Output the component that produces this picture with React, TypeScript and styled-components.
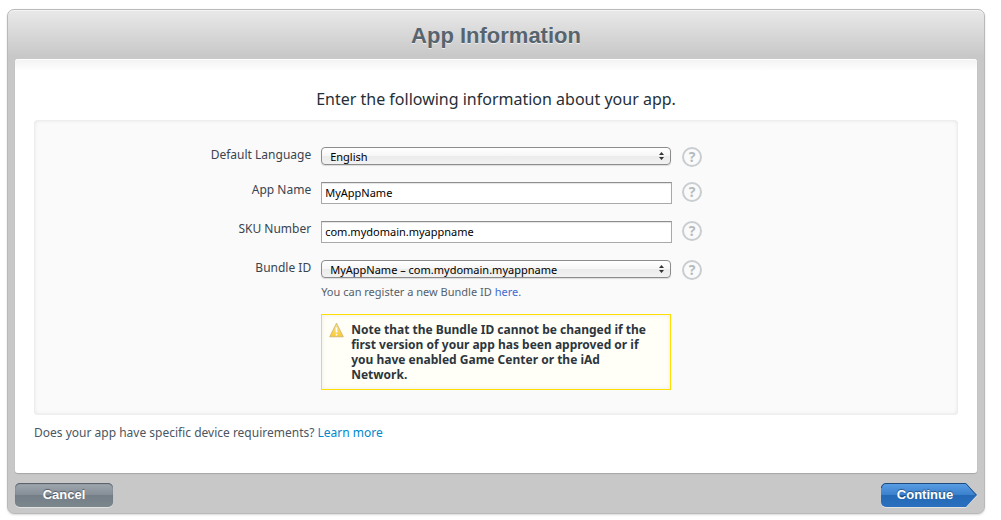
import React from "react";
import styled, { createGlobalStyle, css } from "styled-components";

const GlobalStyle = createGlobalStyle`
  * { box-sizing: border-box; }
  body {
    margin: 0;
    background: #fff;
    color: #39444f;
    font-family: "Lucida Grande", "Noto Sans", sans-serif;
    font-size: 12px;
    line-height: 16px;
  }
`;

const Frame = styled.main`
  margin: 9px 16px 6px 7px;
  padding: 0 7px 6px;
  border: 1px solid #b9b9b9;
  border-radius: 7px;
  background: linear-gradient(#e9e9e9, #c8c8c8 46px);
  box-shadow: inset 0 1px 0 #f5f5f5, 0 1px 2px rgba(0, 0, 0, 0.15);
`;

const Title = styled.h1`
  margin: 0;
  padding: 12px 0 9px;
  color: #57646e;
  font: bold 22px/28px "Liberation Sans", Arial, sans-serif;
  text-align: center;
  text-shadow: 0 1px 0 rgba(255, 255, 255, 0.6);
`;

const Sheet = styled.form`
  padding: 29px 19px 32px;
  border-radius: 3px;
  background: linear-gradient(#f2f2f2, #fff 12px);
  box-shadow: inset 0 1px 0 #fff, 0 1px 1px #a6a6a6;
`;

const Intro = styled.p`
  margin: 0;
  color: #262f38;
  font-size: 16px;
  line-height: 22px;
  text-align: center;
`;

const Panel = styled.section`
  margin-top: 10px;
  padding: 27px 0 25px;
  border-radius: 4px;
  background: #fafafa;
  box-shadow: inset 0 0 4px rgba(0, 0, 0, 0.12);
`;

const Row = styled.div<{ $gap: number }>`
  display: grid;
  grid-template-columns: 30% 351px 20px;
  column-gap: 10px;
  align-items: start;
  margin-bottom: ${(p) => p.$gap}px;
`;

const Label = styled.label`
  text-align: right;
`;

const control = css`
  color: #000;
  font-family: inherit;
  font-size: 11px;
`;

const TextBox = styled.input`
  ${control}
  width: 100%;
  height: 22px;
  padding: 0 3px 2px;
  border: 1px solid #a9a9a9;
  border-top-color: #8e8e8e;
  border-radius: 0;
  background: #fff;
  box-shadow: inset 0 1px 1px #e4e4e4;
`;

const SelectWrap = styled.div`
  position: relative;
  display: flex;
  margin-right: 1px;
`;

const Select = styled.select`
  ${control}
  appearance: none;
  width: 100%;
  height: 18px;
  padding: 0 20px 0 8px;
  border: 1px solid #8c8c8c;
  border-radius: 4px;
  background: linear-gradient(#fff, #f6f6f6 50%, #ebebeb 50%, #f2f2f2);
  box-shadow: 0 1px 1px rgba(0, 0, 0, 0.12);
`;

const Arrows = styled.svg`
  position: absolute;
  top: 5px;
  right: 7px;
  pointer-events: none;
`;

const Help = styled.button`
  width: 20px;
  height: 20px;
  padding: 0;
  border: 2px solid #c9cdd0;
  border-radius: 50%;
  background: transparent;
  color: #b4bbbf;
  font: bold 14px/16px "Noto Sans", sans-serif;
`;

const Hint = styled.p`
  margin: 0;
  padding-top: 6px;
  color: #55606b;
  font-size: 11px;
`;

const Link = styled.a<{ $color: string }>`
  color: ${(p) => p.$color};
  text-decoration: none;
`;

const Note = styled.p`
  display: flex;
  gap: 7px;
  margin: 14px 1px 0 0;
  padding: 7px 16px 7px 7px;
  border: 1px solid #ffde00;
  background: #fffff7;
  box-shadow: inset 0 0 5px rgba(0, 0, 0, 0.08);
  color: #2d363e;
  font-weight: bold;
  line-height: 15px;
`;

const WarningIcon = styled.svg`
  flex: none;
`;

const Requirements = styled.p`
  margin: 10px 0 0;
  color: #4a5661;
`;

const Footer = styled.footer`
  display: flex;
  justify-content: space-between;
  padding-top: 10px;
`;

const buttonText = css`
  border: 0;
  color: #fff;
  font: bold 13px/24px "Liberation Sans", Arial, sans-serif;
  text-shadow: 0 -1px 1px rgba(0, 0, 0, 0.4);
`;

const CancelButton = styled.button`
  ${buttonText}
  width: 98px;
  height: 24px;
  padding: 0;
  border-radius: 5px;
  background: linear-gradient(#a0a8b0, #858e96 50%, #747e86 50%, #7c868d);
  box-shadow: inset 0 1px 1px #555d66, 0 1px 0 #e2e2e2;
`;

const ContinueButton = styled.button`
  ${buttonText}
  position: relative;
  width: 96px;
  height: 24px;
  padding: 0 8px 0 0;
  background: none;
`;

const ArrowShape = styled.svg`
  position: absolute;
  inset: 0;
  z-index: -1;
  overflow: visible;
`;

const ButtonLayer = styled.div`
  position: relative;
  z-index: 0;
`;

function SelectField({ id, value }: { id: string; value: string }) {
  return (
    <SelectWrap>
      <Select id={id} defaultValue={value}>
        <option>{value}</option>
      </Select>
      <Arrows width="5" height="8" viewBox="0 0 5 8">
        <path d="M2.5 0L5 3H0zM2.5 8L0 5h5z" fill="#333" />
      </Arrows>
    </SelectWrap>
  );
}

const HelpButton = ({ topic }: { topic: string }) => (
  <Help type="button" aria-label={`Help: ${topic}`}>?</Help>
);

export default function App() {
  return (
    <>
      <GlobalStyle />
      <Frame>
        <Title>App Information</Title>
        <Sheet id="app-form" onSubmit={(e) => e.preventDefault()}>
          <Intro>Enter the following information about your app.</Intro>
          <Panel>
            <Row $gap={15}>
              <Label htmlFor="language">Default Language</Label>
              <SelectField id="language" value="English" />
              <HelpButton topic="Default Language" />
            </Row>
            <Row $gap={17}>
              <Label htmlFor="name">App Name</Label>
              <TextBox id="name" defaultValue="MyAppName" />
              <HelpButton topic="App Name" />
            </Row>
            <Row $gap={17}>
              <Label htmlFor="sku">SKU Number</Label>
              <TextBox id="sku" defaultValue="com.mydomain.myappname" />
              <HelpButton topic="SKU Number" />
            </Row>
            <Row $gap={0}>
              <Label htmlFor="bundle">Bundle ID</Label>
              <div>
                <SelectField id="bundle" value="MyAppName – com.mydomain.myappname" />
                <Hint>
                  You can register a new Bundle ID <Link href="#" $color="#3f6bd0">here</Link>.
                </Hint>
                <Note>
                  <WarningIcon width="15" height="16" viewBox="0 0 15 16">
                    <defs>
                      <linearGradient id="warn" x1="0" y1="0" x2="0" y2="1">
                        <stop offset="0" stopColor="#f9e28a" />
                        <stop offset="1" stopColor="#fbcb32" />
                      </linearGradient>
                    </defs>
                    <path d="M7.5 1.2L14.3 14.8H.7z" fill="url(#warn)" stroke="#c9b070" strokeWidth=".8" strokeLinejoin="round" />
                    <path d="M7.5 5.5v5M7.5 11.8v1.6" stroke="#fff" strokeWidth="1.6" />
                  </WarningIcon>
                  <span>
                    Note that the Bundle ID cannot be changed if the first version of your app has been
                    approved or if you have enabled Game Center or the iAd Network.
                  </span>
                </Note>
              </div>
              <HelpButton topic="Bundle ID" />
            </Row>
          </Panel>
          <Requirements>
            Does your app have specific device requirements? <Link href="#" $color="#0088cc">Learn more</Link>
          </Requirements>
        </Sheet>
        <Footer>
          <CancelButton type="button">Cancel</CancelButton>
          <ButtonLayer>
            <ContinueButton type="submit" form="app-form">
              <ArrowShape width="96" height="24" viewBox="0 0 96 24">
                <defs>
                  <linearGradient id="blue" x1="0" y1="0" x2="0" y2="1">
                    <stop offset="0" stopColor="#5b9fe6" />
                    <stop offset=".5" stopColor="#3a80cb" />
                    <stop offset=".52" stopColor="#2469b6" />
                    <stop offset="1" stopColor="#2a70be" />
                  </linearGradient>
                </defs>
                <path d="M5 1h80l11 12-11 12H5a5 5 0 0 1-5-5V6a5 5 0 0 1 5-5z" fill="#e2e2e2" />
                <path d="M5 0h80l11 12-11 12H5a5 5 0 0 1-5-5V5a5 5 0 0 1 5-5z" fill="url(#blue)" />
                <path d="M.5 5A4.500 4.500 0 0 1 5 .5h79.800L95.300 12" fill="none" stroke="#1f4a7c" />
              </ArrowShape>
              Continue
            </ContinueButton>
          </ButtonLayer>
        </Footer>
      </Frame>
    </>
  );
}
